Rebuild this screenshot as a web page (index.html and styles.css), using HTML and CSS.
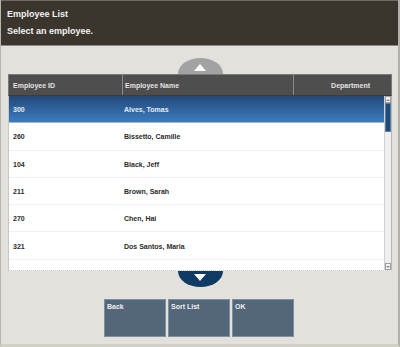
FILE: index.html
```html
<!DOCTYPE html>
<html>
<head>
<meta charset="utf-8">
<link rel="stylesheet" href="styles.css">
</head>
<body>
<div class="app">
  <div class="header">
    <div class="title">Employee List</div>
    <div class="subtitle">Select an employee.</div>
  </div>
  <div class="main">
    <div class="arrow-row">
      <div class="arrow up"><span class="tri-up"></span></div>
    </div>
    <div class="table">
      <div class="thead">
        <div class="th c1">Employee ID</div>
        <div class="th c2">Employee Name</div>
        <div class="th c3">Department</div>
      </div>
      <div class="tbody">
        <div class="rows">
          <div class="row sel"><div class="td c1">300</div><div class="td c2">Alves, Tomas</div></div>
          <div class="row"><div class="td c1">260</div><div class="td c2">Bissetto, Camille</div></div>
          <div class="row"><div class="td c1">104</div><div class="td c2">Black, Jeff</div></div>
          <div class="row"><div class="td c1">211</div><div class="td c2">Brown, Sarah</div></div>
          <div class="row"><div class="td c1">270</div><div class="td c2">Chen, Hai</div></div>
          <div class="row"><div class="td c1">321</div><div class="td c2">Dos Santos, Maria</div></div>
        </div>
        <div class="scrollbar">
          <div class="sb-btn"><span class="sb-tri up"></span></div>
          <div class="sb-track"><div class="sb-thumb"></div></div>
          <div class="sb-btn"><span class="sb-tri down"></span></div>
        </div>
      </div>
    </div>
    <div class="arrow-row">
      <div class="arrow down"><span class="tri-down"></span></div>
    </div>
    <div class="buttons">
      <div class="btn">Back</div>
      <div class="btn">Sort List</div>
      <div class="btn">OK</div>
    </div>
  </div>
</div>
</body>
</html>
```
FILE: styles.css
```css
* { box-sizing: border-box; }
html, body { margin: 0; padding: 0; }
body {
  width: 400px;
  height: 347px;
  overflow: hidden;
  background: #e3e1dc;
  font-family: "Liberation Sans", Arial, sans-serif;
  font-weight: bold;
}
.app {
  width: 400px;
  height: 347px;
  display: flex;
  flex-direction: column;
  border-left: 1px solid #b9b6ae;
  border-right: 2px solid #b3b0a9;
  border-bottom: 3px solid #d2cfc6;
  background: #e3e1dc;
}
.header {
  height: 46px;
  background: #3b362d;
  border-top: 1px solid #6d6a63;
  border-bottom: 1px solid #8d8a84;
  padding: 7px 6px 0;
  color: #f2f2f2;
}
.title { font-size: 9px; line-height: 13px; }
.subtitle { font-size: 9px; line-height: 13px; margin-top: 4px; }
.main {
  display: flex;
  flex-direction: column;
  padding-top: 12px;
}
.arrow-row {
  display: flex;
  justify-content: center;
  padding-left: 1px;
}
.arrow {
  width: 45px;
  height: 16px;
  display: flex;
  justify-content: center;
}
.arrow.up {
  background: #a2a2a2;
  border-radius: 23px 23px 0 0 / 16px 16px 0 0;
  align-items: flex-end;
  padding-bottom: 3px;
}
.arrow.down {
  background: #0e3a63;
  border-radius: 0 0 23px 23px / 0 0 16px 16px;
  align-items: flex-start;
  padding-top: 3px;
}
.tri-up {
  width: 0; height: 0;
  border-left: 6px solid transparent;
  border-right: 6px solid transparent;
  border-bottom: 7px solid #fff;
}
.tri-down {
  width: 0; height: 0;
  border-left: 6px solid transparent;
  border-right: 6px solid transparent;
  border-top: 7px solid #fff;
}
.table {
  margin-left: 7px;
  width: 384px;
  display: flex;
  flex-direction: column;
}
.thead {
  height: 22px;
  display: flex;
  background: #4e4e4e;
  border: 1px solid #7a7a7a;
  border-bottom: 1px solid #3c3c3c;
}
.th {
  font-size: 7px;
  color: #e2e2e2;
  display: flex;
  align-items: center;
  padding-left: 4px;
}
.thead .c1 { width: 114px; border-right: 1px solid #8a8a8a; }
.thead .c2 { width: 171px; border-right: 1px solid #8a8a8a; padding-left: 2px; }
.thead .c3 { flex: 1; justify-content: flex-end; padding-right: 21px; }
.tbody {
  height: 175px;
  display: flex;
  background: #fff;
  border-left: 1px solid #c8c8c8;
  border-bottom: 1px dotted #c8c8c8;
  overflow: hidden;
}
.rows { flex: 1; display: flex; flex-direction: column; }
.row {
  height: 27.3px;
  flex: none;
  display: flex;
  align-items: center;
  padding-top: 1px;
  border-bottom: 1px solid #f0f0f0;
  font-size: 7px;
  color: #2a2a2a;
}
.row.sel {
  background: linear-gradient(#23497a, #3a7cc0);
  border-bottom: 1px solid #a9b5c4;
  color: #e6ecf3;
}
.td.c1 { width: 114px; padding-left: 4px; }
.td.c2 { padding-left: 1px; }
.scrollbar {
  width: 8px;
  display: flex;
  flex-direction: column;
  background: #eeeeee;
  border-left: 1px solid #cfcfcf;
  border-right: 1px solid #b8b8b8;
}
.sb-btn {
  height: 7px;
  background: #f4f4f4;
  border: 1px solid #a0a0a0;
  display: flex;
  align-items: center;
  justify-content: center;
}
.sb-tri { width: 0; height: 0; border-left: 2px solid transparent; border-right: 2px solid transparent; }
.sb-tri.up { border-bottom: 2px solid #888; }
.sb-tri.down { border-top: 2px solid #888; }
.sb-track { flex: 1; background: #efefef; }
.sb-thumb {
  height: 29px;
  background: #1f4a79;
  border: 1px solid #5f7fa3;
}
.buttons {
  display: flex;
  gap: 2px;
  margin-left: 103px;
  margin-top: 12px;
}
.btn {
  width: 62px;
  height: 38px;
  background: #546679;
  border: 1px solid #7f919f;
  color: #f0f0f0;
  font-size: 7px;
  padding: 2px 2px;
  line-height: 9px;
}
```
